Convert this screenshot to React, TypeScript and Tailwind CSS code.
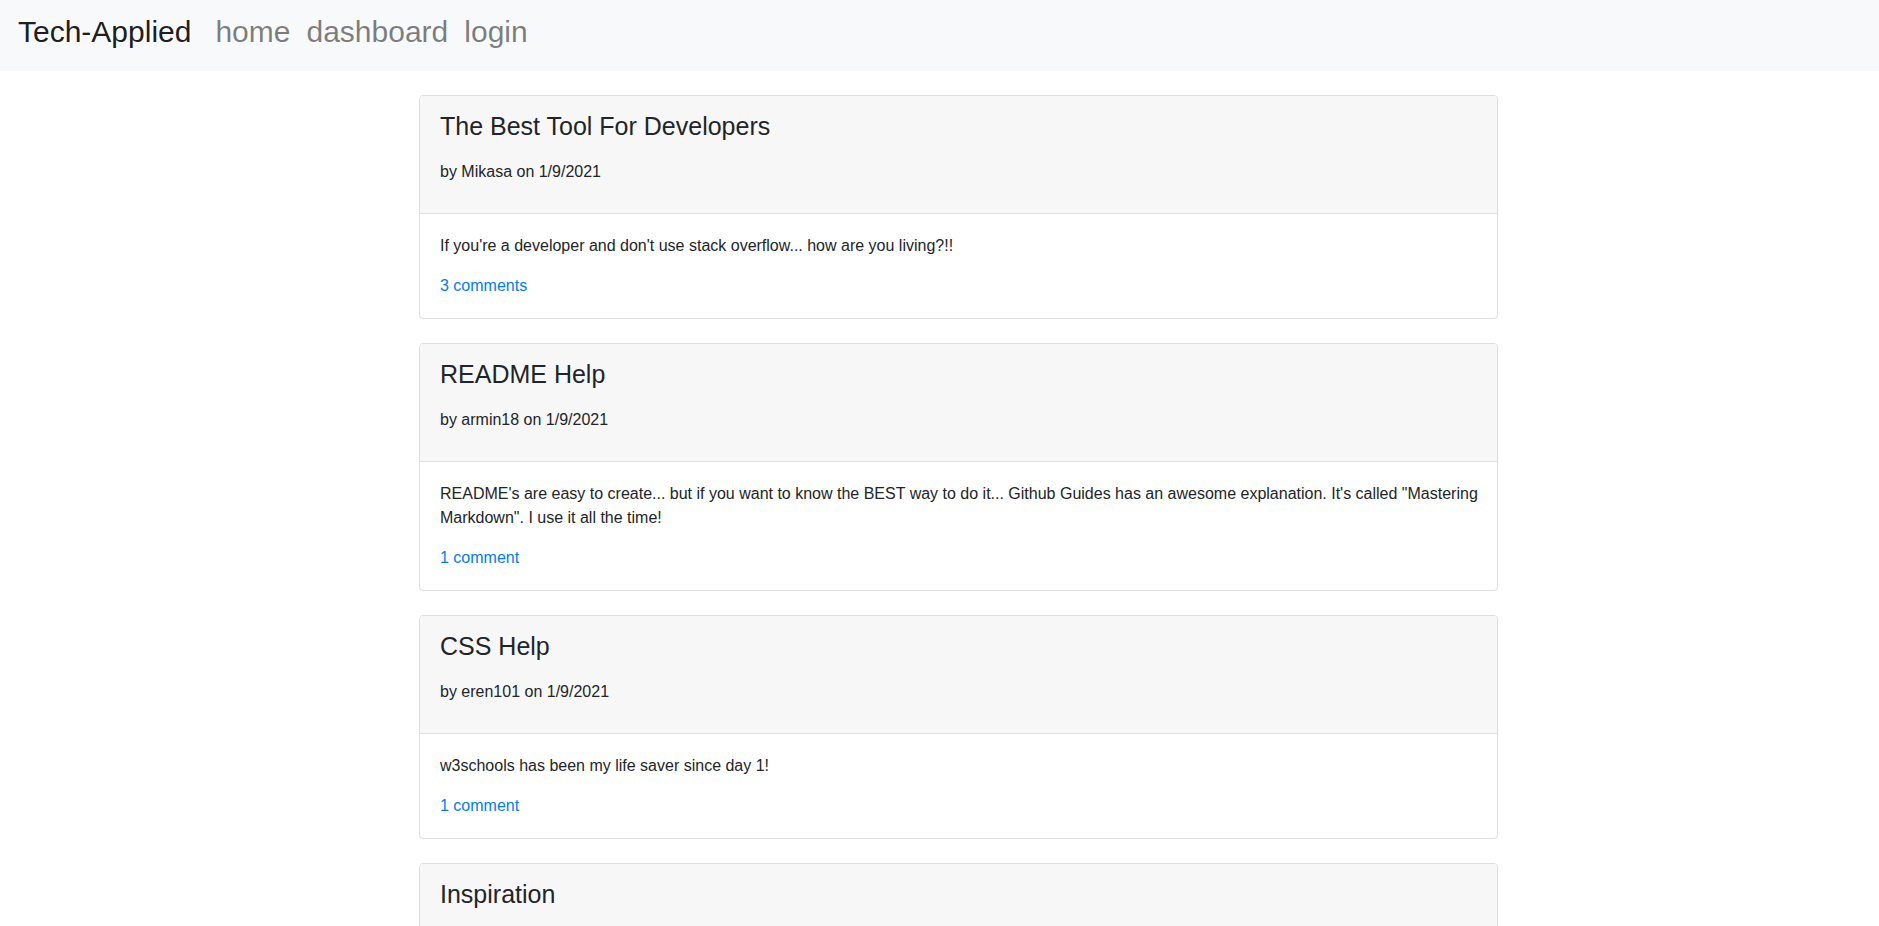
import React from 'react';

interface Post {
  id: number;
  title: string;
  author: string;
  date: string;
  body: string;
  comments: number;
}

const posts: Post[] = [
  {
    id: 1,
    title: 'The Best Tool For Developers',
    author: 'Mikasa',
    date: '1/9/2021',
    body: "If you're a developer and don't use stack overflow... how are you living?!!",
    comments: 3,
  },
  {
    id: 2,
    title: 'README Help',
    author: 'armin18',
    date: '1/9/2021',
    body: 'README\'s are easy to create... but if you want to know the BEST way to do it... Github Guides has an awesome explanation. It\'s called "Mastering Markdown". I use it all the time!',
    comments: 1,
  },
  {
    id: 3,
    title: 'CSS Help',
    author: 'eren101',
    date: '1/9/2021',
    body: 'w3schools has been my life saver since day 1!',
    comments: 1,
  },
  {
    id: 4,
    title: 'Inspiration',
    author: 'Mikasa',
    date: '1/9/2021',
    body: 'Keep building things, even the small ones.',
    comments: 0,
  },
];

function Navbar() {
  return (
    <nav className="flex h-[71px] items-start bg-[#f8f9fa] pl-[18px] pt-[14px]">
      <a href="#" className="mr-4 text-[30px] leading-[36px] text-[rgba(0,0,0,0.9)]">
        Tech-Applied
      </a>
      <div className="flex">
        {['home', 'dashboard', 'login'].map((link) => (
          <a
            key={link}
            href="#"
            className="px-2 text-[30px] leading-[36px] text-[rgba(0,0,0,0.5)] hover:text-[rgba(0,0,0,0.7)]"
          >
            {link}
          </a>
        ))}
      </div>
    </nav>
  );
}

function PostCard({ post }: { post: Post }) {
  const label = post.comments === 1 ? '1 comment' : `${post.comments} comments`;

  return (
    <div className="mb-6 rounded-[4px] border border-[#dfdfdf] bg-white">
      {/* header */}
      <div className="rounded-t-[3px] border-b border-[#dfdfdf] bg-[#f7f7f7] px-5 pb-[13px] pt-[15px]">
        <h4 className="mb-[19px] text-[25px] leading-[30px] text-[#212529]">{post.title}</h4>
        <p className="mb-4 text-base leading-6 text-[#212529]">
          by {post.author} on {post.date}
        </p>
      </div>

      {/* body */}
      <div className="py-5 pl-5 pr-4">
        <p className="mb-4 text-base leading-6 text-[#212529]">{post.body}</p>
        <a href="#" className="text-base leading-6 text-[#007bff] hover:underline">
          {label}
        </a>
      </div>
    </div>
  );
}

export default function App() {
  return (
    <div className="min-h-screen bg-white font-['Liberation_Sans',Arial,sans-serif]">
      <Navbar />
      <main className="ml-[419px] mt-6 w-[1079px]">
        {posts.map((post) => (
          <PostCard key={post.id} post={post} />
        ))}
      </main>
    </div>
  );
}
